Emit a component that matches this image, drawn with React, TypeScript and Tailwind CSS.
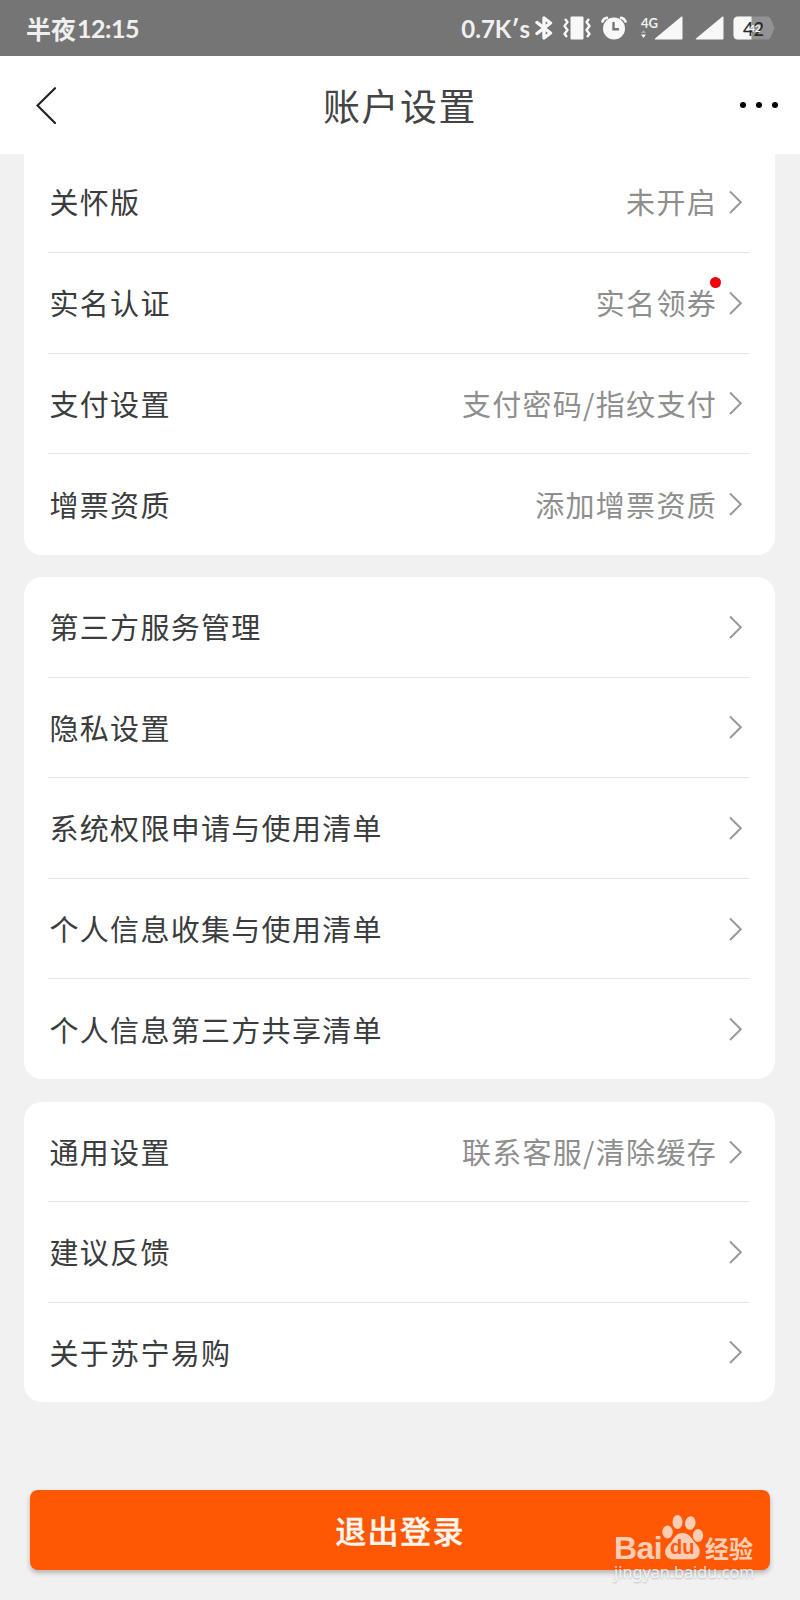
import React from 'react';

interface SettingItem {
  label: string;
  value?: string;
  hasDot?: boolean;
}

const accountItems: SettingItem[] = [
  { label: '关怀版', value: '未开启' },
  { label: '实名认证', value: '实名领券', hasDot: true },
  { label: '支付设置', value: '支付密码/指纹支付' },
  { label: '增票资质', value: '添加增票资质' },
];

const privacyItems: SettingItem[] = [
  { label: '第三方服务管理' },
  { label: '隐私设置' },
  { label: '系统权限申请与使用清单' },
  { label: '个人信息收集与使用清单' },
  { label: '个人信息第三方共享清单' },
];

const generalItems: SettingItem[] = [
  { label: '通用设置', value: '联系客服/清除缓存' },
  { label: '建议反馈' },
  { label: '关于苏宁易购' },
];

function SignalIcon() {
  return (
    <svg width="29" height="24" viewBox="0 0 29 24" fill="#f8f8f8">
      <path d="M27.5 0.5 Q28.5 0 28.5 1.5 V22.5 Q28.5 23.5 27.5 23.5 H1.5 Q0 23.5 1 22.5 Z" />
    </svg>
  );
}

function StatusBar() {
  return (
    <div className="flex h-14 shrink-0 items-center justify-between bg-[#757575] pl-[26px] pr-[25px] text-[#f0f0f0]">
      <div className="flex items-center whitespace-nowrap font-bold">
        <span className="text-[25px] leading-none">半夜</span>
        <span className="ml-px font-['Lato','Noto_Sans_CJK_SC',sans-serif] text-[25px] leading-none tracking-[-0.5px]">12:15</span>
      </div>
      <div className="flex items-center">
        <span className="whitespace-nowrap pt-px font-['Lato',sans-serif] text-[24px] font-bold leading-none">0.7K′s</span>
        {/* bluetooth */}
        <svg className="ml-[5px]" width="18" height="24" viewBox="0 0 18 24" fill="none" stroke="#f8f8f8" strokeWidth="3.4" strokeLinejoin="round" strokeLinecap="round">
          <path d="M2 6.5 L15.5 17 L9 22 V2 L15.5 7 L2 17.5" />
        </svg>
        {/* vibrate */}
        <svg className="ml-[10px]" width="28" height="24" viewBox="0 0 28 24" fill="none" stroke="#f8f8f8" strokeWidth="2.4" strokeLinejoin="round">
          <rect x="7.5" y="0.5" width="13" height="23" rx="1" fill="#f8f8f8" stroke="none" />
          <path d="M2 3 L4.5 6 L1.5 10 L4.5 14 L1.5 18 L4 21" />
          <path d="M26 3 L23.5 6 L26.5 10 L23.5 14 L26.5 18 L24 21" />
        </svg>
        {/* alarm */}
        <svg className="ml-[10px]" width="26" height="24" viewBox="0 0 26 24" fill="none" strokeLinecap="round">
          <path d="M1.5 5.5 Q2.5 2.5 6 1.8 M24.5 5.5 Q23.5 2.5 20 1.8" stroke="#f8f8f8" strokeWidth="2.5" />
          <circle cx="13" cy="12.5" r="11" fill="#f8f8f8" />
          <path d="M12.5 7 V13.2 H17" stroke="#757575" strokeWidth="2.4" />
        </svg>
        <div className="ml-[14px] flex h-6 w-[13px] flex-col">
          <span className="font-['Lato',sans-serif] text-[13px] font-bold leading-[14px]">4G</span>
          <svg width="5" height="8" viewBox="0 0 5 8">
            <path d="M2.5 0 L5 3 H0 Z" fill="#a8a8a8" />
            <path d="M2.5 8 L5 4.5 H0 Z" fill="#f8f8f8" />
          </svg>
        </div>
        <SignalIcon />
        <div className="ml-[12px] flex">
          <SignalIcon />
        </div>
        {/* battery */}
        <svg className="ml-[9px]" width="42" height="24" viewBox="0 0 42 24">
          <path d="M5 0.5 H34 Q37 0.5 38 3 L41.5 12 L38 21 Q37 23.5 34 23.5 H5 Q0.5 23.5 0.5 19 V5 Q0.5 0.5 5 0.5 Z" fill="#929292" />
          <path d="M5 0.5 H18.5 V23.5 H5 Q0.5 23.5 0.5 19 V5 Q0.5 0.5 5 0.5 Z" fill="#f8f8f8" />
          <text x="10" y="19.5" fontSize="20" fontWeight="500" fontFamily="Lato" fill="#2a2a2a" textLength="21" lengthAdjust="spacingAndGlyphs">42</text>
          <text x="16" y="15.5" fontSize="10" fontWeight="700" fontFamily="Lato" fill="#f8f8f8">42</text>
        </svg>
      </div>
    </div>
  );
}

function Header() {
  return (
    <header className="grid h-[98px] shrink-0 grid-cols-[1fr_auto_1fr] items-center bg-white pl-[36px] pr-[22px]">
      <svg width="20" height="37" viewBox="0 0 20 37" fill="none" stroke="#222" strokeWidth="2.2" strokeLinecap="round">
        <path d="M19 1.2 L1.5 18.5 L19 36" />
      </svg>
      <h1 className="mr-[14px] whitespace-nowrap pt-px text-[37px] leading-none tracking-[1.5px] text-[#444]">账户设置</h1>
      <div className="flex gap-[10px] justify-self-end">
        <span className="size-[6px] rounded-full bg-black" />
        <span className="size-[6px] rounded-full bg-black" />
        <span className="size-[6px] rounded-full bg-black" />
      </div>
    </header>
  );
}

function SettingRow({ label, value, hasDot }: SettingItem) {
  return (
    <div className="flex flex-1 items-center border-b border-[#e6e6e6] pl-[1.5px] pr-[7px] text-[29px] leading-none tracking-[1.3px] last:border-b-0">
      <span className="flex-1 whitespace-nowrap text-[#3a3c3e]">{label}</span>
      {value && (
        <span className="relative whitespace-nowrap text-[#8e8e8e]">
          {value}
          {hasDot && <span className="absolute -right-[4px] -top-[11px] size-[11px] rounded-full bg-[#f2000c]" />}
        </span>
      )}
      <svg className="ml-[12px]" width="13" height="24" viewBox="0 0 13 24" fill="none" stroke="#999" strokeWidth="2">
        <path d="M1 1.5 L11.8 12.3 L1 23" />
      </svg>
    </div>
  );
}

function SettingCard({ items, className }: { items: SettingItem[]; className: string }) {
  return (
    <section className={`mx-6 flex w-[751px] shrink-0 flex-col bg-white pl-6 pr-[26px] ${className}`}>
      {items.map((item) => (
        <SettingRow key={item.label} {...item} />
      ))}
    </section>
  );
}

function Watermark() {
  return (
    <div className="absolute bottom-[17px] left-[614px] w-[146px] whitespace-nowrap">
      <div className="flex items-end text-[#ffcdb4]">
        <span className="w-[47px] font-['Liberation_Sans',sans-serif] text-[32px] font-bold leading-[24px] tracking-[-0.6px]">Bai</span>
        <div className="relative h-[46px] w-[44px]">
          <svg width="44" height="46" viewBox="51 2 44 46" fill="#ffcdb4">
            <ellipse cx="57.5" cy="20" rx="5.2" ry="6.5" />
            <ellipse cx="67.5" cy="10" rx="5" ry="7" />
            <ellipse cx="80.3" cy="11" rx="5.2" ry="6.8" transform="rotate(8 80.3 11)" />
            <ellipse cx="88" cy="23.5" rx="5.2" ry="6.5" />
            <path d="M72.5 21 C78 21 81 25 84 29.5 C87.5 33.5 90.5 36 89.5 41.5 C88.5 46.5 84.5 47.5 80 47.2 H65 C60 47.8 56 45.5 55.2 41 C54.5 36 58 33.5 61.5 29.5 C64.5 25 67 21 72.5 21 Z" />
          </svg>
          <span className="absolute bottom-[3px] left-[9px] font-['Liberation_Sans',sans-serif] text-[20px] font-bold leading-[20px] text-[#ff5a0a]">du</span>
        </div>
        <span className="text-[24px] font-bold leading-[24px]">经验</span>
      </div>
      <div className="mt-px font-['Noto_Sans',sans-serif] text-[16px] leading-[22px] tracking-[0.1px] text-white/80 [text-shadow:0_1px_2px_rgba(0,0,0,0.25)]">
        jingyan.baidu.com
      </div>
    </div>
  );
}

export default function App() {
  return (
    <div className="relative flex h-[1600px] w-[800px] flex-col overflow-hidden bg-[#f1f1f1] font-['Noto_Sans_CJK_SC',sans-serif]">
      <StatusBar />
      <Header />
      <SettingCard items={accountItems} className="-mt-[2px] h-[403px] rounded-b-[18px] pb-px" />
      <SettingCard items={privacyItems} className="mt-[22px] h-[502px] rounded-[18px]" />
      <SettingCard items={generalItems} className="mt-[23px] h-[300px] rounded-[18px]" />
      <button className="ml-[30px] mt-[88px] h-20 w-[740px] shrink-0 rounded-lg bg-[#ff5805] pb-[2px] text-[31px] font-medium leading-none tracking-[1.4px] text-[#fff6ee] shadow-[0_3px_5px_rgba(0,0,0,0.25)] [-webkit-text-stroke:0.4px_#fff6ee]">
        退出登录
      </button>
      <Watermark />
    </div>
  );
}
